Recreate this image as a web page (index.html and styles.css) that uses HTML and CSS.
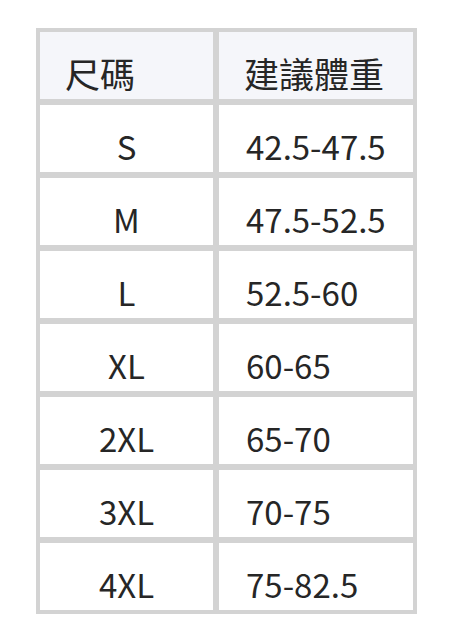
FILE: index.html
```html
<!DOCTYPE html>
<html lang="zh-Hant">
<head>
<meta charset="utf-8">
<link rel="stylesheet" href="styles.css">
</head>
<body>
<div class="table">
  <div class="cell head">尺碼</div>
  <div class="cell head">建議體重</div>
  <div class="cell size">S</div>
  <div class="cell wt">42.5-47.5</div>
  <div class="cell size">M</div>
  <div class="cell wt">47.5-52.5</div>
  <div class="cell size">L</div>
  <div class="cell wt">52.5-60</div>
  <div class="cell size">XL</div>
  <div class="cell wt">60-65</div>
  <div class="cell size">2XL</div>
  <div class="cell wt">65-70</div>
  <div class="cell size">3XL</div>
  <div class="cell wt">70-75</div>
  <div class="cell size">4XL</div>
  <div class="cell wt">75-82.5</div>
</div>
</body>
</html>
```
FILE: styles.css
```css
html, body {
  margin: 0;
  padding: 0;
  background: #ffffff;
}
body {
  padding: 28px 0 0 36px;
  font-family: "Noto Sans CJK TC", "Noto Sans", sans-serif;
  color: #262626;
}
.table {
  display: grid;
  grid-template-columns: 173px 194px;
  grid-auto-rows: 67px;
  gap: 6px;
  padding: 4px;
  width: max-content;
  background: #d3d3d3;
}
.cell {
  background: #ffffff;
  display: flex;
  align-items: flex-end;
  font-size: 33px;
  line-height: 46px;
  padding-bottom: 3px;
  box-sizing: border-box;
}
.head {
  background: #f5f6fa;
  justify-content: flex-start;
  font-size: 35px;
  line-height: 48px;
  padding-left: 25px;
  padding-bottom: 2px;
}
.head + .head {
  padding-left: 25px;
}
.size {
  justify-content: center;
}
.wt {
  padding-left: 27px;
}
```
